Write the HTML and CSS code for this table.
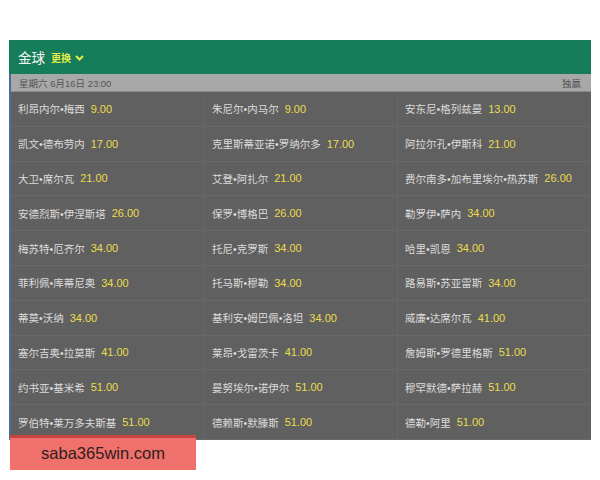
FILE: index.html
```html
<!DOCTYPE html>
<html>
<head>
<meta charset="utf-8">
<link rel="stylesheet" href="styles.css">
</head>
<body>
<div class="page">
  <div class="panel">
    <div class="head">
      <span class="title">金球</span>
      <span class="change">更换</span>
      <svg class="chev" width="9" height="6" viewBox="0 0 9 6"><path d="M1 1 L4.5 4.5 L8 1" fill="none" stroke="#e3ec4a" stroke-width="2"/></svg>
    </div>
    <div class="datebar">
      <span>星期六 6月16日 23:00</span>
      <span>独赢</span>
    </div>
    <div class="grid">
      <div class="cell"><span class="n">利昂内尔•梅西</span><span class="o">9.00</span></div>
      <div class="cell"><span class="n">朱尼尔•内马尔</span><span class="o">9.00</span></div>
      <div class="cell"><span class="n">安东尼•格列兹曼</span><span class="o">13.00</span></div>
      <div class="cell"><span class="n">凯文•德布劳内</span><span class="o">17.00</span></div>
      <div class="cell"><span class="n">克里斯蒂亚诺•罗纳尔多</span><span class="o">17.00</span></div>
      <div class="cell"><span class="n">阿拉尔孔•伊斯科</span><span class="o">21.00</span></div>
      <div class="cell"><span class="n">大卫•席尔瓦</span><span class="o">21.00</span></div>
      <div class="cell"><span class="n">艾登•阿扎尔</span><span class="o">21.00</span></div>
      <div class="cell"><span class="n">费尔南多•加布里埃尔•热苏斯</span><span class="o">26.00</span></div>
      <div class="cell"><span class="n">安德烈斯•伊涅斯塔</span><span class="o">26.00</span></div>
      <div class="cell"><span class="n">保罗•博格巴</span><span class="o">26.00</span></div>
      <div class="cell"><span class="n">勒罗伊•萨内</span><span class="o">34.00</span></div>
      <div class="cell"><span class="n">梅苏特•厄齐尔</span><span class="o">34.00</span></div>
      <div class="cell"><span class="n">托尼•克罗斯</span><span class="o">34.00</span></div>
      <div class="cell"><span class="n">哈里•凯恩</span><span class="o">34.00</span></div>
      <div class="cell"><span class="n">菲利佩•库蒂尼奥</span><span class="o">34.00</span></div>
      <div class="cell"><span class="n">托马斯•穆勒</span><span class="o">34.00</span></div>
      <div class="cell"><span class="n">路易斯•苏亚雷斯</span><span class="o">34.00</span></div>
      <div class="cell"><span class="n">蒂莫•沃纳</span><span class="o">34.00</span></div>
      <div class="cell"><span class="n">基利安•姆巴佩•洛坦</span><span class="o">34.00</span></div>
      <div class="cell"><span class="n">威廉•达席尔瓦</span><span class="o">41.00</span></div>
      <div class="cell"><span class="n">塞尔吉奥•拉莫斯</span><span class="o">41.00</span></div>
      <div class="cell"><span class="n">莱昂•戈雷茨卡</span><span class="o">41.00</span></div>
      <div class="cell"><span class="n">詹姆斯•罗德里格斯</span><span class="o">51.00</span></div>
      <div class="cell"><span class="n">约书亚•基米希</span><span class="o">51.00</span></div>
      <div class="cell"><span class="n">曼努埃尔•诺伊尔</span><span class="o">51.00</span></div>
      <div class="cell"><span class="n">穆罕默德•萨拉赫</span><span class="o">51.00</span></div>
      <div class="cell"><span class="n">罗伯特•莱万多夫斯基</span><span class="o">51.00</span></div>
      <div class="cell"><span class="n">德赖斯•默滕斯</span><span class="o">51.00</span></div>
      <div class="cell"><span class="n">德勒•阿里</span><span class="o">51.00</span></div>
    </div>
  </div>
  <div class="mark">saba365win.com</div>
</div>
</body>
</html>
```
FILE: styles.css
```css
html, body {
  margin: 0;
  padding: 0;
  background: #ffffff;
}
.page {
  position: relative;
  width: 600px;
  height: 480px;
  padding: 40px 9px 0 9px;
  box-sizing: border-box;
  font-family: "Liberation Sans", "Noto Sans CJK SC", sans-serif;
}
.panel {
  width: 582px;
  background: #606060;
  border-left: 2px solid #4d6c97;
  box-sizing: border-box;
}
.head {
  height: 34px;
  background: #167d5a;
  display: flex;
  align-items: center;
  margin-left: -2px;
  padding-left: 9px;
}
.title {
  color: #f0f4f0;
  font-size: 13.5px;
}
.change {
  color: #e3ec4a;
  font-size: 10px;
  font-weight: bold;
  margin-left: 6px;
}
.chev {
  margin-left: 4px;
  margin-top: 1px;
}
.datebar {
  height: 18px;
  background: #a8a8a8;
  display: flex;
  justify-content: space-between;
  align-items: center;
  padding: 0 10px 0 8px;
  font-size: 9.5px;
  color: #555555;
  border-bottom: 1px solid #8a8a8a;
  box-sizing: border-box;
}
.grid {
  display: grid;
  grid-template-columns: 194px 193px 193px;
  grid-auto-rows: 34.8px;
}
.cell {
  display: flex;
  align-items: center;
  padding-left: 7px;
  border-right: 1px solid #666666;
  border-bottom: 1px solid #686868;
  box-sizing: border-box;
  font-size: 10.5px;
}
.cell:nth-child(3n) {
  border-right: none;
}
.n {
  color: #dcdcdc;
}
.o {
  color: #ecdc4c;
  font-size: 11px;
  margin-left: 6px;
}
.mark {
  position: absolute;
  left: 10px;
  top: 435px;
  width: 186px;
  height: 35px;
  background: #f0716b;
  border-top: 3px solid #c8453e;
  box-sizing: border-box;
  color: #2e1e1e;
  font-size: 16.5px;
  text-align: center;
  line-height: 31px;
}
```
